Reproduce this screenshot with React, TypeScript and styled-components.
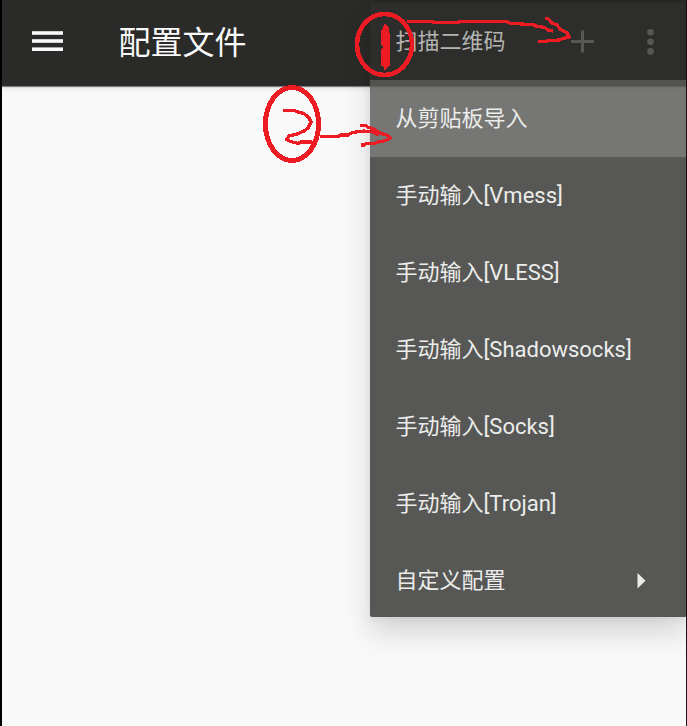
import React from "react";
import styled, { createGlobalStyle } from "styled-components";

const GlobalStyle = createGlobalStyle`
  * { box-sizing: border-box; }
  html, body { margin: 0; padding: 0; background: #000; overflow: hidden; }
  body { font-family: Roboto, "Noto Sans CJK SC", sans-serif; }
`;

const Screen = styled.div`
  position: relative;
  width: 687px;
  height: 726px;
  overflow: hidden;
  background: #f9f9f9;
  border-left: 2px solid #000;
`;

const Toolbar = styled.header`
  display: flex;
  align-items: center;
  height: 86px;
  padding: 0 33px 4px 30px;
  background: #2a2b28;
  color: #fafafa;
  box-shadow: 0 1px 1px rgba(0, 0, 0, 0.45), 0 2px 6px rgba(0, 0, 0, 0.1);
`;

const Title = styled.h1`
  flex: 1;
  margin: 0 0 0 55.5px;
  padding-top: 4px;
  font-size: 32px;
  line-height: 48px;
  font-weight: 400;
`;

const Actions = styled.div`
  display: flex;
  align-items: center;
  gap: 53px;
  padding-top: 1px;
`;

const Menu = styled.ul`
  position: absolute;
  top: 3px;
  left: 368px;
  width: 317px;
  height: 614px;
  margin: 0;
  padding: 0;
  list-style: none;
  overflow: visible;
  background: rgba(46, 48, 45, 0.8);
  border-radius: 2px;
  box-shadow: 0 16px 28px rgba(0, 0, 0, 0.15), 0 2px 6px rgba(0, 0, 0, 0.06);
`;

const MenuItem = styled.li<{ $active?: boolean; $dim?: boolean }>`
  display: flex;
  align-items: center;
  justify-content: space-between;
  height: 76.9px;
  padding: 2px 41px 0 25.5px;
  font-size: 22px;
  line-height: 32px;
  color: ${(p) => (p.$dim ? "#b4b5b3" : "#ecedeb")};
  background: ${(p) => (p.$active ? "rgba(255, 255, 255, 0.185)" : "transparent")};
`;

const ScreenEdge = styled.div`
  position: absolute;
  top: 0;
  right: 0;
  bottom: 0;
  width: 1px;
  background: #111;
`;

const Markup = styled.svg`
  position: absolute;
  top: 0;
  left: -2px;
  pointer-events: none;
`;

const items = [
  { label: "扫描二维码", dim: true },
  { label: "从剪贴板导入", active: true },
  { label: "手动输入[Vmess]" },
  { label: "手动输入[VLESS]" },
  { label: "手动输入[Shadowsocks]" },
  { label: "手动输入[Socks]" },
  { label: "手动输入[Trojan]" },
  { label: "自定义配置", submenu: true },
];

const HamburgerIcon = () => (
  <svg width="31" height="22" viewBox="0 0 31 22" fill="currentColor">
    <rect y="1.2" width="31" height="3.6" />
    <rect y="9.2" width="31" height="3.6" />
    <rect y="17.4" width="31" height="3.6" />
  </svg>
);

const PlusIcon = () => (
  <svg width="23" height="24" viewBox="0 0 23 24" stroke="currentColor" strokeWidth="3">
    <path d="M11.5 .6V22.6M.2 11.6H22.8" />
  </svg>
);

const MoreIcon = () => (
  <svg width="7" height="28" viewBox="0 0 7 28" fill="currentColor">
    <circle cx="3.5" cy="4.2" r="3.3" />
    <circle cx="3.5" cy="13.8" r="3.3" />
    <circle cx="3.5" cy="23.4" r="3.3" />
  </svg>
);

const SubmenuIcon = () => (
  <svg width="9" height="16" viewBox="0 0 9 16" fill="currentColor">
    <path d="M.5 0L8.5 7.7L.5 15.4Z" />
  </svg>
);

const Annotations = () => (
  <Markup
    width="687"
    height="726"
    viewBox="0 0 687 726"
    fill="none"
    stroke="#ed1c24"
    strokeWidth="3.2"
    shapeRendering="crispEdges"
  >
    <ellipse cx="384.5" cy="44.5" rx="27.5" ry="30.5" strokeWidth="4.6" />
    <path
      d="M384 24H386L389 28V32L390 34V66L387 67V69L384 70V67L381 66V50L383 47L381 44V31L383 28Z"
      fill="#ed1c24"
      stroke="none"
    />
    <path d="M407 21.5H432L434 22.5H458L460 21.5H506L511 23.5L533 24.5L536 26L545 27.5L548 30L553 31" />
    <path d="M545 18.5H548L552 23L557 25L560 29L567 33L569 37L563 38.5L559 40L548 40.5L546 41.5H538" />
    <ellipse cx="292" cy="124" rx="26.5" ry="36.5" strokeWidth="5" />
    <path d="M283 110.5H294L298 112L304 113.5L309 118L311 122L308 128L304 131L297 134L289 136L286.5 139.5L291 141.5L298 143.5L301 142H312" />
    <path d="M320 136.5H338L341 135H348L352 132.5L364 131L373 132L379 135" />
    <path d="M360 125.5H366L368 127.5L373 128.5L378 132L383 134L388 135.5L390 138L386 140.5L378 142L374 143.5H366L364 145H361" />
  </Markup>
);

export default function App() {
  return (
    <>
      <GlobalStyle />
      <Screen>
        <Toolbar>
          <HamburgerIcon />
          <Title>配置文件</Title>
          <Actions>
            <PlusIcon />
            <MoreIcon />
          </Actions>
        </Toolbar>
        <Menu>
          {items.map((item) => (
            <MenuItem key={item.label} $active={item.active} $dim={item.dim}>
              <span>{item.label}</span>
              {item.submenu && <SubmenuIcon />}
            </MenuItem>
          ))}
        </Menu>
        <ScreenEdge />
        <Annotations />
      </Screen>
    </>
  );
}
